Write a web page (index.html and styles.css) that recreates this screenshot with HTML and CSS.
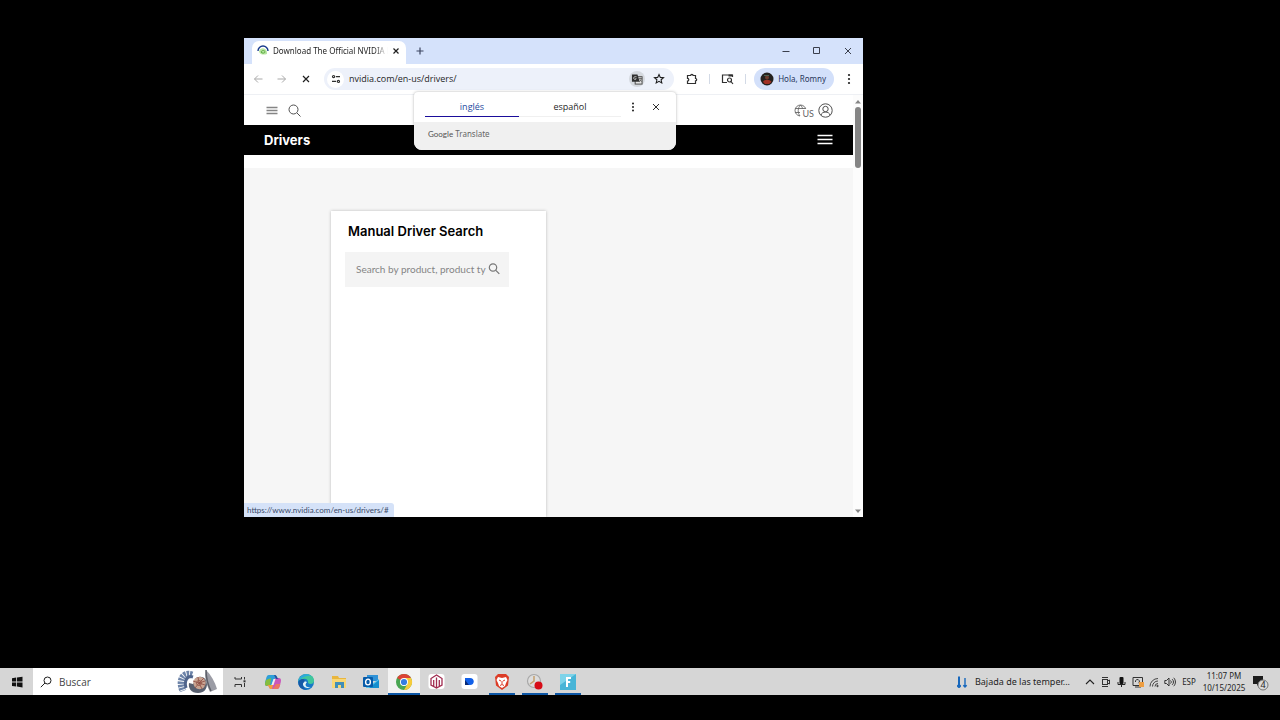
FILE: index.html
```html
<!DOCTYPE html>
<html lang="es">
<head>
<meta charset="utf-8">
<title>Escritorio</title>
<link rel="stylesheet" href="styles.css">
</head>
<body>
<main class="desktop">
  <section class="window" aria-label="Chrome">
    <div class="tabstrip">
      <div class="tab">
        <svg class="favicon" width="12" height="12" viewBox="0 0 12 12" fill="none"><path d="M1 6a5 5 0 0 1 10 0" stroke="#173a8c" stroke-width="1.4"/><path d="M2 6.500c1-4 6-4.500 8 0v2.500c-3 1-7 1-8-2.500z" fill="#b9e6a2"/><path d="M4 7c1-2 3.500-2 4.200 0-.8 1.500-3 1.500-4.200 0z" stroke="#5cab43"/></svg>
        <span class="tab-title">Download The Official NVIDIA D</span>
        <button class="icon-btn" aria-label="Cerrar pestaña"><svg width="8" height="8" viewBox="0 0 8 8"><path d="M1.500 1.500l5 5M6.500 1.500l-5 5" stroke="#1f1f1f" stroke-width="1.200"/></svg></button>
      </div>
      <button class="icon-btn new-tab" aria-label="Nueva pestaña"><svg width="10" height="10" viewBox="0 0 10 10"><path d="M5 1.500v7M1.500 5h7" stroke="#3c4560" stroke-width="1.200"/></svg></button>
      <div class="window-controls">
        <button class="icon-btn" aria-label="Minimizar"><svg width="10" height="10" viewBox="0 0 10 10"><path d="M1.500 5.500h7" stroke="#3a3f4c"/></svg></button>
        <button class="icon-btn" aria-label="Maximizar"><svg width="10" height="10" viewBox="0 0 10 10"><path d="M1.500 1.500h6v6h-6z" fill="none" stroke="#3a3f4c"/></svg></button>
        <button class="icon-btn" aria-label="Cerrar"><svg width="10" height="10" viewBox="0 0 10 10"><path d="M2 2l6 6M8 2l-6 6" stroke="#3a3f4c"/></svg></button>
      </div>
    </div>

    <div class="toolbar">
      <div class="nav-buttons">
        <button class="icon-btn" aria-label="Atrás"><svg width="10" height="10" viewBox="0 0 10 10" fill="none" stroke="#a9a9a9"><path d="M9.500 5h-8M5 1.500L1.500 5 5 8.500"/></svg></button>
        <button class="icon-btn" aria-label="Adelante"><svg width="10" height="10" viewBox="0 0 10 10" fill="none" stroke="#a9a9a9"><path d="M.5 5h8M5 1.500L8.500 5 5 8.500"/></svg></button>
        <button class="icon-btn" aria-label="Detener"><svg width="10" height="10" viewBox="0 0 10 10"><path d="M2 2l6 6M8 2l-6 6" stroke="#1f1f1f" stroke-width="1.200"/></svg></button>
      </div>
      <div class="omnibox">
        <button class="icon-btn site-info" aria-label="Información del sitio"><svg width="10" height="10" viewBox="0 0 10 10" fill="none" stroke="#303030" stroke-width="1.200"><circle cx="2.600" cy="2.600" r="1.100"/><path d="M5 2.600h4M1 7.400h4"/><circle cx="7.400" cy="7.400" r="1.100"/></svg></button>
        <input class="url" type="text" aria-label="Dirección" value="nvidia.com/en-us/drivers/">
        <button class="icon-btn translate-btn" aria-label="Traducir"><svg width="12" height="12" viewBox="0 0 13 12"><rect x="4.500" y="3.500" width="7.500" height="8" fill="#e4e4e4" stroke="#444"/><path d="M1 1h6l2.500 8H1z" fill="#303030"/><path d="M6 3.500H4.400a1.500 1.500 0 1 0 1.300 2.200H4.500" fill="none" stroke="#ddd" stroke-width=".8"/><path d="M8 5.500h4M10 4.500v1M11 5.500c0 2-1 3-2 3.500M9.500 6.500l2 2.500" stroke="#555" fill="none" stroke-width=".8"/></svg></button>
        <button class="icon-btn" aria-label="Marcador"><svg width="12" height="12" viewBox="0 0 12 12"><path d="M6 1.500l1.300 2.900 3.200.3L8.100 6.800l.7 3.100L6 8.300 3.200 9.900l.7-3.100-2.400-2.100 3.200-.3z" fill="none" stroke="#1f1f1f" stroke-width="1.100"/></svg></button>
      </div>
      <div class="extensions">
        <button class="icon-btn" aria-label="Extensiones"><svg width="12" height="12" viewBox="0 0 12 12"><path d="M1.500 2.500h3.200a1.200 1.200 0 0 1 2.400 0h2.400v3a1.200 1.200 0 0 1 0 2.400v2.600h-8V8a1.300 1.300 0 0 0 0-2.600z" fill="none" stroke="#303030" stroke-width="1.200"/></svg></button>
        <span class="separator"></span>
        <button class="icon-btn" aria-label="Buscar en la página"><svg width="13" height="12" viewBox="0 0 13 12" fill="none" stroke="#303030" stroke-width="1.200"><path d="M6 9.500H1.500v-7.500h10V4"/><path d="M7.500 2.500h4" stroke-width="2"/><circle cx="8.500" cy="7" r="2"/><path d="M10 8.500l2 2.500"/></svg></button>
        <span class="separator"></span>
      </div>
      <button class="profile"><svg width="14" height="14" viewBox="0 0 14 14"><circle cx="7" cy="7" r="6.500" fill="#24211f"/><path d="M3 10c1-3 7-3 8.500 0L9 12H5z" fill="#a33126"/><circle cx="7" cy="5.500" r="2" fill="#6e3b2c"/><path d="M4 3.500h5" stroke="#4c6250"/></svg>Hola, Romny</button>
      <button class="icon-btn menu-btn" aria-label="Menú"><svg width="4" height="12" viewBox="0 0 4 12" fill="#1f1f1f"><circle cx="2" cy="2" r="1.100"/><circle cx="2" cy="6" r="1.100"/><circle cx="2" cy="10" r="1.100"/></svg></button>
    </div>

    <div class="viewport">
      <div class="page">
        <header class="site-header">
          <button class="icon-btn" aria-label="Menú del sitio"><svg width="12" height="10" viewBox="0 0 12 10"><path d="M.5 1.500h11M.5 4.500h11M.5 7.500h11" stroke="#858585" stroke-width="1.300"/></svg></button>
          <button class="icon-btn" aria-label="Buscar"><svg width="13" height="13" viewBox="0 0 13 13" fill="none" stroke="#505050"><circle cx="5.500" cy="5.500" r="4.500"/><path d="M9 9l3.500 3.500"/></svg></button>
          <span class="grow"></span>
          <button class="locale"><svg width="13" height="13" viewBox="0 0 13 13" fill="none" stroke="#666" stroke-width=".9"><path d="M6 12A5.500 5.500 0 1 1 12 6M1 4.500h10.500M1 8.500h5M6.500 1C3.500 4 3.500 9 6 12M6.500 1c1.500 1.500 2.200 3 2.200 5"/></svg><span class="locale-code">US</span></button>
          <button class="icon-btn" aria-label="Cuenta"><svg width="15" height="15" viewBox="0 0 15 15" fill="none" stroke="#505050"><circle cx="7.500" cy="7.500" r="6.700"/><circle cx="7.500" cy="6" r="2.700"/><path d="M3 12.200c.5-4.200 8.500-4.200 9 0"/></svg></button>
        </header>
        <nav class="site-nav">
          <a class="site-nav-title" href="#">Drivers</a>
          <button class="icon-btn" aria-label="Abrir menú"><svg width="16" height="12" viewBox="0 0 16 12"><path d="M.5 1.500h15M.5 5.500h15M.5 9.500h15" stroke="#fff" stroke-width="1.400"/></svg></button>
        </nav>
        <div class="content">
          <form class="card">
            <h1 class="card-title"><label for="product">Manual Driver Search</label></h1>
            <div class="search-field">
              <input id="product" class="search-input" type="text" placeholder="Search by product, product ty">
              <svg width="12" height="12" viewBox="0 0 12 12" fill="none" stroke="#777" stroke-width="1.200"><circle cx="5" cy="4.500" r="3.700"/><path d="M7.800 7.300l3.500 3.500"/></svg>
            </div>
          </form>
        </div>
      </div>
      <div class="scrollbar">
        <svg width="8" height="8" viewBox="0 0 8 8"><path d="M1 5.500l3-3.500 3 3.500z" fill="#858585"/></svg>
        <span class="thumb"></span>
        <svg width="8" height="8" viewBox="0 0 8 8"><path d="M1 2.500l3 3.500 3-3.500z" fill="#858585"/></svg>
      </div>
    </div>

    <aside class="translate-popup" aria-label="Traductor">
      <div class="translate-top">
        <button class="lang lang-active">inglés</button>
        <button class="lang">español</button>
        <button class="icon-btn popup-menu" aria-label="Opciones"><svg width="4" height="10" viewBox="0 0 4 10" fill="#1f1f1f"><circle cx="2" cy="1.500" r="1"/><circle cx="2" cy="5" r="1"/><circle cx="2" cy="8.500" r="1"/></svg></button>
        <button class="icon-btn" aria-label="Cerrar traductor"><svg width="10" height="10" viewBox="0 0 10 10"><path d="M2 2l6 6M8 2l-6 6" stroke="#303030"/></svg></button>
      </div>
      <div class="translate-foot"><span class="brand">Google</span> Translate</div>
    </aside>
    <div class="status">https://www.nvidia.com/en-us/drivers/#</div>
  </section>
</main>

<footer class="taskbar">
  <button class="icon-btn start" aria-label="Inicio"><svg width="12" height="12" viewBox="0 0 12 12" fill="#111"><path d="M1 2.200l4.200-.6v4H1zM6 1.500l5.500-.8v4.900H6zM1 6.400h4.200v4L1 9.900zM6 6.400h5.500v5L6 10.600z"/></svg></button>
  <label class="task-search">
    <svg width="12" height="12" viewBox="0 0 12 12" fill="none" stroke="#202020"><circle cx="7.500" cy="4.500" r="3.500"/><path d="M5 7L.8 11.200"/></svg>
    <input class="task-input" type="text" placeholder="Buscar" aria-label="Buscar">
    <svg width="44" height="25" viewBox="0 0 44 25"><path d="M17 6C9 3 3 10 8 22" fill="none" stroke="#6c83a8" stroke-width="7" stroke-dasharray="2.200 .8"/><path d="M18 8C12 6 9 12 11 19" fill="none" stroke="#50658c" stroke-width="3"/><path d="M14 14c-1 5 2 10 9 10 6 0 9-4 9-9s-4-8-8-7c-5 0-4 5-6 7z" fill="#59606f"/><circle cx="24.500" cy="14" r="6.200" fill="#c9a491"/><path d="M24 14l6-2M24 14l3 6M24 14l-4 5M24 14l-6-2M24 14l-1-6M24 14l5-5M24 14l6 2" stroke="#8c4b42" stroke-width=".8"/><circle cx="24" cy="14" r="2.500" fill="none" stroke="#9c6050"/><path d="M31 1c-2 6 0 14 4 22l7-3c-2-7-6-14-11-19z" fill="#9b9ca5"/><path d="M31 1c0 7 2 15 5 21" fill="none" stroke="#5d6069" stroke-width="1.500"/></svg>
  </label>
  <nav class="apps">
    <button class="app" aria-label="Vista de tareas"><svg width="12" height="12" viewBox="0 0 12 12" fill="none" stroke="#333"><path d="M1 1v2h6.500V1M1 11V8.500h6.500V11M10.500 1v2.500M10.500 7v4"/><path d="M9.500 5.300h2" stroke-width="2"/></svg></button>
    <button class="app" aria-label="Copilot"><svg width="18" height="18" viewBox="0 0 18 18"><path d="M5 2h6c2 0 2 4 4 4h-5L7 13H3c-3 0-2-4-1-7 .5-2 1-4 3-4z" fill="#2e9fd8"/><path d="M2 7l5-2-1 8H3c-3 0-2-3-1-6z" fill="#86bd3e"/><path d="M13 16H7c-2 0-2-4-4-4h5l3-7h4c3 0 2 4 1 7-.5 2-1 4-3 4z" fill="#c957bb"/><path d="M3 12h6l-1 4H7c-2 0-2-4-4-4z" fill="#f2a13c"/><path d="M12 11h4.300c-.8 3-1.300 5-3.300 5H9z" fill="#ed7563"/><path d="M11 2h-1l2 4h3c-2 0-2-4-4-4z" fill="#27509e"/><path d="M7.500 12l2-6h2l-2 6z" fill="#eee"/></svg></button>
    <button class="app" aria-label="Edge"><svg width="18" height="18" viewBox="0 0 18 18"><circle cx="9" cy="9" r="8" fill="#1879c7"/><path d="M1 9C2-1 17-1 17 8c0 3-4 4-6 2 1-5-6-6-10-1z" fill="#41c79b"/><path d="M1 9C3 0 12 0 14 3 9 2 5 4 1 9z" fill="#2ba9df"/><path d="M7 8c-3 4 1 9 7 6-5 1-7-2-4-5z" fill="#e4f3f7"/><path d="M1.500 8c5-4 7-1 6 1-3 1-2 7 3 8-6 0-10-4-9-9z" fill="#155aa7"/></svg></button>
    <button class="app" aria-label="Explorador"><svg width="18" height="18" viewBox="0 0 18 18"><path d="M2 3h6l1 2h7v9H2z" fill="#e9b63e"/><path d="M2 6h14v9H2z" fill="#f8d775"/><path d="M5 9h9v6h-3v-3H8v3H5z" fill="#408eb9"/></svg></button>
    <button class="app" aria-label="Outlook"><svg width="18" height="18" viewBox="0 0 18 18"><path d="M5 2h11v6H5z" fill="#2f92d7"/><path d="M4 7l6 4 7-5v9H4z" fill="#57c5ed"/><path d="M7 15l10-8v8z" fill="#168fce"/><rect x="1" y="4" width="10" height="10" rx="1" fill="#075ba9"/><ellipse cx="6" cy="9" rx="2.400" ry="2.900" fill="none" stroke="#fff" stroke-width="1.400"/></svg></button>
    <button class="app app-active app-open" aria-label="Chrome"><svg width="18" height="18" viewBox="0 0 18 18"><circle cx="9" cy="9" r="8" fill="#4aa653"/><path d="M9 9L2.100 5A8 8 0 0 1 16 5z" fill="#dc4336"/><path d="M9 5h7a8 8 0 0 1-7 12l4-7z" fill="#f7cb3a"/><circle cx="9" cy="9" r="4" fill="#fff"/><circle cx="9" cy="9" r="3.100" fill="#347de0"/></svg></button>
    <button class="app" aria-label="Panel"><svg width="17" height="17" viewBox="0 0 17 17"><rect x=".5" y="1" width="16" height="15" rx="3" fill="#fff"/><path d="M3 12V5.500l5.500-3.500L14 5.500V12l-5.500 3zM5.700 13V7M8.500 14.500V4.500M11.300 13V7" fill="none" stroke="#a12c50" stroke-width="1.300"/></svg></button>
    <button class="app" aria-label="Reproductor"><svg width="17" height="17" viewBox="0 0 17 17"><rect x=".5" y="1" width="16" height="15" rx="3" fill="#fff"/><path d="M4 5h5c5 0 5 7 0 7H4z" fill="#1260e8"/><path d="M4 7l4 5H4z" fill="#082975"/></svg></button>
    <button class="app app-open" aria-label="Brave"><svg width="18" height="18" viewBox="0 0 18 18"><path d="M5 1h8l3 3-1 8.500L9 17l-6-4.500L2 4z" fill="#dc3c27"/><path d="M5 4l4 1 4-1 1.500 3-1.500 3-1 3-3 2-3-2-1-3-1.500-3z" fill="#fff"/><path d="M6 7l2 1M12 7l-2 1M9 8v3M7 12.500l2-1 2 1" stroke="#dc3c27" fill="none"/></svg></button>
    <button class="app app-open" aria-label="Grabador"><svg width="18" height="18" viewBox="0 0 18 18"><circle cx="8" cy="8" r="6.500" fill="#ddd" stroke="#a8a8a8" stroke-width="1.200"/><path d="M8 3v5l-4 3" fill="none" stroke="#c5a06d" stroke-width="1.500"/><circle cx="12.500" cy="12.500" r="4" fill="#d70d17"/></svg></button>
    <button class="app app-open" aria-label="F"><svg width="18" height="18" viewBox="0 0 18 18"><rect x="1" y="1" width="16" height="16" fill="#48b5d7"/><path d="M1 1h16L1 12z" fill="#7dd3e9"/><path d="M8 14V5h4M8 9h3.200" fill="none" stroke="#fff" stroke-width="2"/></svg></button>
  </nav>
  <span class="grow"></span>
  <button class="weather"><svg width="14" height="14" viewBox="0 0 14 14" fill="none" stroke="#1768bd"><path d="M4 1.500v10" stroke-width="2"/><circle cx="4" cy="11" r="1.500" fill="#1768bd"/><path d="M10 3v9M8.300 10.200L10 12l1.700-1.800" stroke-width="1.400"/></svg>Bajada de las temper...</button>
  <div class="tray">
    <button class="tray-icon" aria-label="Mostrar iconos ocultos"><svg width="12" height="12" viewBox="0 0 12 12"><path d="M2 8l4-4 4 4" fill="none" stroke="#222" stroke-width="1.100"/></svg></button>
    <button class="tray-icon" aria-label="Cámara"><svg width="12" height="12" viewBox="0 0 12 12" fill="none" stroke="#333"><rect x="2.500" y="3.500" width="5" height="5"/><path d="M7.500 5l2-1v4l-2-1M2 1.500h6M2 10.500h6"/></svg></button>
    <button class="tray-icon" aria-label="Micrófono"><svg width="12" height="12" viewBox="0 0 12 12"><rect x="3.500" y="1" width="4" height="7" rx="1" fill="#111"/><path d="M2 6v2.500h7V6M5.500 8v3" fill="none" stroke="#222"/></svg></button>
    <button class="tray-icon" aria-label="Actualizaciones"><svg width="12" height="12" viewBox="0 0 12 12"><path d="M1 1.500h9.500v8H1zM3 11h6" fill="none" stroke="#333"/><path d="M3.500 6a2 2 0 1 1 3 1.200" fill="none" stroke="#333"/><rect x="7" y="6" width="5" height="5" fill="#ed9d40"/></svg></button>
    <button class="tray-icon" aria-label="Red"><svg width="12" height="12" viewBox="0 0 12 12" fill="none" stroke="#444"><path d="M2 10.500a8 8 0 0 1 8-8M4.500 10.500A5.500 5.500 0 0 1 10 5M7 10.500a3 3 0 0 1 3-3"/><circle cx="9.500" cy="10" r=".7" fill="#222"/></svg></button>
    <button class="tray-icon" aria-label="Volumen"><svg width="12" height="12" viewBox="0 0 12 12" fill="none" stroke="#333"><path d="M.8 4.500h1.700L5 2v8L2.500 7.500H.8zM6.500 4.500c1 1 1 2 0 3M8.200 3.200c1.700 1.700 1.700 4 0 5.600M9.700 1.800c2.300 2.500 2.300 6 0 8.400"/></svg></button>
    <button class="input-lang">ESP</button>
    <button class="clock"><span>11:07 PM</span><span>10/15/2025</span></button>
    <button class="icon-btn notifications" aria-label="Notificaciones"><svg width="18" height="18" viewBox="0 0 18 18"><path d="M1 3h10v8H7l-2 2v-2H1z" fill="#1c1c1c"/><circle cx="11" cy="12" r="5" fill="#dadada" stroke="#777"/><text class="badge-count" x="11" y="15" text-anchor="middle">4</text></svg></button>
  </div>
</footer>
</body>
</html>
```
FILE: styles.css
```css
* { box-sizing: border-box; }

body {
  margin: 0;
  min-height: 100vh;
  display: flex;
  flex-direction: column;
  padding-bottom: 25px;
  background: #000;
  font-family: "Noto Sans", "Open Sans", sans-serif;
  font-size: 9px;
  line-height: 12px;
  color: #1f1f1f;
}

button, input {
  margin: 0;
  padding: 0;
  border: 0;
  background: none;
  font: inherit;
  color: inherit;
  outline: none;
}

svg { display: block; flex: none; }
.icon-btn { display: flex; align-items: center; justify-content: center; flex: none; }
.grow { flex: 1; }

.desktop { flex: 1; position: relative; }

.window {
  position: absolute;
  left: 244px;
  top: 38px;
  width: 619px;
  height: 479px;
  display: flex;
  flex-direction: column;
  overflow: hidden;
  background: #fff;
}

/* Tabs */
.tabstrip {
  display: flex;
  align-items: stretch;
  height: 26px;
  padding: 3px 0 0 8px;
  background: #d5e2fb;
}
.tab {
  display: flex;
  align-items: center;
  width: 154px;
  padding: 0 6px 3px 5px;
  gap: 4px;
  border-radius: 7px 7px 0 0;
  background: #fff;
}
.tab-title {
  flex: 1;
  overflow: hidden;
  white-space: nowrap;
  font-size: 8px;
  -webkit-mask-image: linear-gradient(to right, #000 88%, transparent);
  mask-image: linear-gradient(to right, #000 88%, transparent);
}
.new-tab { width: 28px; padding-bottom: 3px; }
.window-controls { display: flex; margin-left: auto; padding-bottom: 3px; }
.window-controls .icon-btn { width: 31px; }

/* Toolbar */
.toolbar {
  display: flex;
  align-items: center;
  height: 31px;
  padding: 0 12px 0 2px;
  border-bottom: 1px solid #eef0f4;
}
.nav-buttons { display: flex; width: 78px; }
.nav-buttons .icon-btn { width: 24px; }
.omnibox {
  display: flex;
  align-items: center;
  flex: 1;
  height: 22px;
  padding: 0 9px 0 3px;
  gap: 8px;
  border-radius: 11px;
  background: #edf1fa;
}
.site-info { width: 17px; height: 17px; border-radius: 9px; background: #fff; }
.url { flex: 1; min-width: 0; margin-left: -3px; font-family: "Open Sans", sans-serif; }
.translate-btn { width: 16px; height: 16px; border-radius: 8px; background: #d5d9df; }
.extensions { display: flex; align-items: center; gap: 11px; margin: 0 8px 0 12px; }
.separator { width: 1px; height: 10px; background: #d3dae6; }
.profile {
  display: flex;
  align-items: center;
  gap: 4px;
  height: 22px;
  padding: 0 8px 0 6px;
  border-radius: 11px;
  background: #d3e0fa;
  font-size: 8px;
  color: #27365c;
}
.menu-btn { margin-left: 13px; }

/* Page */
.viewport { display: flex; flex: 1; min-height: 0; }
.page { display: flex; flex-direction: column; flex: 1; min-width: 0; }
.site-header {
  display: flex;
  align-items: center;
  height: 30px;
  padding: 1px 20px 0 22px;
  gap: 10px;
}
.locale { display: flex; align-items: center; margin-right: -6px; }
.locale-code {
  margin-left: -5px;
  padding-top: 6px;
  background: linear-gradient(#fff, #fff) 0 100% / 100% 11px no-repeat;
  font-family: Lato, sans-serif;
  font-size: 9px;
  color: #666;
}
.site-nav {
  display: flex;
  align-items: center;
  justify-content: space-between;
  height: 30px;
  padding: 0 20px;
  background: #000;
}
.site-nav-title {
  font-family: Inter, "Noto Sans", sans-serif;
  font-size: 13px;
  font-weight: 700;
  line-height: 16px;
  color: #fff;
  text-decoration: none;
}
.content {
  display: flex;
  flex: 1;
  margin-top: 13px;
  padding: 43px 87px 0;
  background: #f6f6f6;
}
.card {
  width: 215px;
  padding: 12px 14px;
  background: #fff;
  box-shadow: 0 0 3px #bbb;
}
.card-title {
  margin: 0 0 13px 3px;
  font-family: Inter, "Noto Sans", sans-serif;
  font-size: 13px;
  font-weight: 600;
  line-height: 16px;
  color: #000;
}
.search-field {
  display: flex;
  align-items: center;
  width: 164px;
  height: 35px;
  padding: 0 9px 2px 11px;
  background: #f4f4f4;
}
.search-input { flex: 1; min-width: 0; font-family: Lato, "Open Sans", sans-serif; font-size: 10px; }
.search-input::placeholder { color: #858585; opacity: 1; }

.scrollbar {
  display: flex;
  flex-direction: column;
  align-items: center;
  width: 10px;
  padding: 3px 0 2px;
  background: #fcfcfc;
}
.thumb { width: 6px; height: 61px; margin: 1px 0 auto; border-radius: 3px; background: #858585; }

/* Overlays in the window */
.translate-popup {
  position: absolute;
  top: 54px;
  left: 170px;
  width: 262px;
  border-radius: 4px 4px 8px 8px;
  overflow: hidden;
  background: #fff;
  box-shadow: 0 0 3px rgba(0, 0, 0, .3);
}
.translate-top { display: flex; align-items: center; height: 30px; padding: 0 15px 0 11px; }
.lang { width: 94px; height: 20px; padding-top: 1px; border-bottom: 1px solid #f0f0f0; font-family: "Open Sans", sans-serif; font-size: 9px; }
.lang + .lang { width: 102px; }
.lang-active { border-bottom-color: #1a0d9b; color: #244a9e; }
.popup-menu { margin: 0 16px 0 10px; }
.translate-foot { height: 28px; padding: 6px 14px; background: #f0f0f0; font-size: 8px; color: #666; }
.brand { font-family: Lato, sans-serif; color: #505050; }
.status {
  position: absolute;
  left: 0;
  bottom: 0;
  padding: 1px 5px 1px 3px;
  border-radius: 0 3px 0 0;
  background: #d5e2f8;
  font-family: Lato, "Noto Sans", sans-serif;
  font-size: 8px;
  color: #3a4a68;
}

/* Taskbar */
.taskbar { display: flex; height: 27px; background: #d6d6d6; }
.start { width: 33px; }
.task-search {
  display: flex;
  align-items: center;
  width: 190px;
  padding: 0 4px 0 7px;
  gap: 7px;
  background: #fff;
}
.task-input { flex: 1; min-width: 0; font-family: "Open Sans", sans-serif; font-size: 10px; }
.task-input::placeholder { color: #444; opacity: 1; }
.apps { display: flex; width: 361px; padding-left: 1px; }
.app {
  display: flex;
  align-items: center;
  justify-content: center;
  flex: 1;
  padding-top: 2px;
  border-bottom: 2px solid transparent;
}
.app-open { background: linear-gradient(#0c56a5, #0c56a5) center bottom / 26px 2px no-repeat border-box; }
.app-active { background-color: #f2f2f2; background-size: 100% 2px; }
.weather { display: flex; align-items: center; gap: 6px; margin-right: 12px; }
.tray { display: flex; align-items: stretch; padding-right: 6px; }
.tray-icon { display: flex; align-items: center; justify-content: center; width: 16px; }
.input-lang { width: 22px; font-size: 8px; }
.clock { display: flex; flex-direction: column; align-items: center; justify-content: center; width: 48px; font-size: 8px; line-height: 12px; }
.notifications { width: 26px; }
.badge-count { font-size: 9px; fill: #222; }
```
